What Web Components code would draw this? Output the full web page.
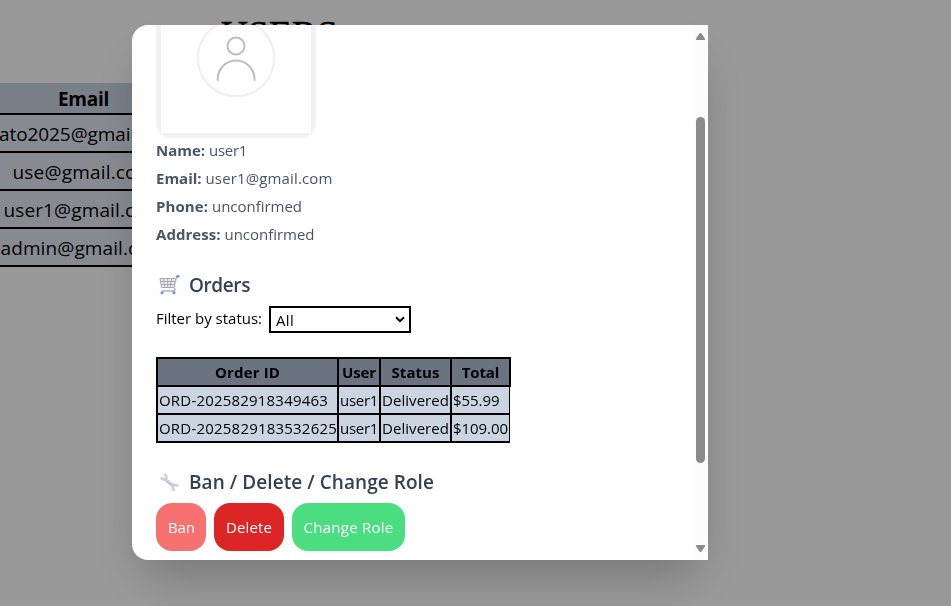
<!DOCTYPE html>
<html lang="en">
<head>
<meta charset="utf-8">
<title>Users</title>
<style>
html,body{margin:0;height:100%;overflow:hidden;background:#fff}
body{font-family:"Open Sans","Noto Sans",sans-serif;font-size:15px;color:#000}
</style>
</head>
<body>
<users-page></users-page>
<user-modal></user-modal>
<script>
const define = (name, html, ready) => customElements.define(name, class extends HTMLElement {
  constructor() {
    super();
    this.attachShadow({mode: 'open'}).innerHTML = html;
  }
  connectedCallback() { if (ready) ready.call(this); }
});

/* Text run whose tracking adapts to the width in its "w" attribute. */
define('fit-text', `<style>:host{display:inline-block;white-space:nowrap;flex:none}span{display:inline-block}</style><span><slot></slot></span>`, function () {
  const w = parseFloat(this.getAttribute('w'));
  const span = this.shadowRoot.querySelector('span');
  this.style.width = w + 'px';
  const n = this.textContent.length;
  const natural = span.getBoundingClientRect().width;
  if (n && natural) span.style.letterSpacing = ((w - natural) / n) + 'px';
});

define('email-row', `<style>
:host{display:flex;box-sizing:border-box;height:38px;align-items:center;justify-content:center;padding-top:1px;border-bottom:2px solid #000;background:#e2e8f0;font-size:19px}
:host([head]){height:32px;background:#cbd5e1;font-weight:700}
</style><slot></slot>`);

define('users-page', `<style>
:host{display:block;height:606px;overflow:hidden}
h1{margin:0;padding:15px 0 0 221px;height:68px;font:400 37px/40px "Liberation Serif",serif;-webkit-text-stroke:.6px #000}
section{width:167px}
</style>
<h1><fit-text w="117">USERS</fit-text></h1>
<section>
<email-row head><fit-text w="51">Email</fit-text></email-row>
<email-row style="padding-left:10px"><fit-text w="179">ato2025@gmail.com</fit-text></email-row>
<email-row><fit-text w="142">use@gmail.com</fit-text></email-row>
<email-row><fit-text w="160">user1@gmail.com</fit-text></email-row>
<email-row><fit-text w="166">admin@gmail.com</fit-text></email-row>
</section>`);

define('user-avatar', `<style>
:host{display:block;box-sizing:border-box;width:160px;height:160px;margin-top:-47px;border:5px solid #f2f2f2;border-radius:16px;background:#f2f2f2}
svg{display:block;background:#fff}
</style>
<svg width="150" height="150" viewBox="0 0 150 150" fill="none" stroke-linecap="round">
<circle cx="75" cy="75" r="38.2" stroke="#efefef" stroke-width="2"/>
<g stroke="#bdbdbd" stroke-width="2"><circle cx="75" cy="63" r="8.5"/><path d="M56.7 97v-1a18.4 18.4 0 0 1 36.8 0v1"/></g>
</svg>`);

define('info-line', `<style>
:host{display:flex;height:28px;align-items:center;gap:4px;color:#475569}
::slotted([slot=label]){font-weight:700}
</style><slot name="label"></slot><slot></slot>`);

define('section-title', `<style>
:host{display:flex;height:28px;align-items:center;gap:9px;color:#334155;font-size:19px;font-weight:600}
::slotted(svg){flex:none}
</style><slot></slot>`);

define('status-select', `<style>
:host{display:flex;box-sizing:border-box;width:142px;height:27px;border:2px solid #000;background:#fff;align-items:center;justify-content:space-between;padding:1px 4px 0 5px}
svg{display:block;margin-top:-2px}
</style><slot></slot><svg width="10" height="7" viewBox="0 0 10 7" fill="none" stroke="#000" stroke-width="2"><path d="M1 1.2 5 5.2 9 1.2"/></svg>`);

define('order-table', `<style>
:host{display:grid;box-sizing:border-box;width:355px;grid-template-columns:179px 40px 69px 57px;grid-auto-rows:26px;gap:2px;padding:2px;background:linear-gradient(#000,#000) 0 0/354px 100% no-repeat,linear-gradient(#000,#000) 0 0/355px 30px no-repeat}
</style><slot></slot>`);
define('order-cell', `<style>
:host{display:flex;align-items:center;padding-left:1px;background:#cbd5e1;min-width:0}
:host([head]){justify-content:center;padding:0;background:#6b7280;font-weight:700}
</style><slot></slot>`);

define('pill-button', `<style>
:host{display:flex;height:48px;align-items:center;justify-content:center;padding:0 12px;border-radius:16px;background:var(--tone);color:#fff}
</style><slot></slot>`);

define('scroll-rail', `<style>
:host{display:flex;box-sizing:border-box;width:15px;height:535px;flex-direction:column;align-items:center;background:#fcfcfc;padding:8px 0 8px}
i{width:9px;height:346px;margin-top:77px;margin-bottom:auto;border-radius:5px;background:#8b8b8b}
svg{display:block}
</style>
<svg width="11" height="7" viewBox="0 0 11 7"><path d="M5.5 0Q6.2 0 6.7.8L10 5.4Q10.5 7 9.2 7H1.8Q.5 7 1 5.4L4.3.8Q4.8 0 5.5 0Z" fill="#8b8b8b"/></svg>
<i></i>
<svg width="11" height="7" viewBox="0 0 11 7"><path d="M5.5 7Q6.2 7 6.7 6.2L10 1.6Q10.5 0 9.2 0H1.8Q.5 0 1 1.6L4.3 6.2Q4.8 7 5.5 7Z" fill="#8b8b8b"/></svg>`);

define('user-modal', `<style>
:host{position:fixed;inset:0;display:block;background:rgba(0,0,0,.4)}
.card{display:flex;box-sizing:border-box;width:576px;height:535px;margin:25px 0 0 132px;background:#fff;border-radius:16px 0 0 16px;overflow:hidden;box-shadow:0 25px 50px -12px rgba(0,0,0,.25)}
main{flex:1;min-width:0;padding-left:24px}
.info{margin-top:-2px}
.orders{margin-top:23px}
.filter{display:flex;align-items:center;gap:7px;margin-top:7px;height:27px}
.filter>fit-text{margin-top:-3px}
order-table{margin-top:24px}
.role{margin-top:25px}
.actions{display:flex;gap:8px;margin-top:7px}
</style>
<div class="card">
<main>
<user-avatar></user-avatar>
<div class="info">
<info-line><fit-text slot="label" w="49">Name:</fit-text><fit-text w="38">user1</fit-text></info-line>
<info-line><fit-text slot="label" w="45.5">Email:</fit-text><fit-text w="127">user1@gmail.com</fit-text></info-line>
<info-line><fit-text slot="label" w="52">Phone:</fit-text><fit-text w="90">unconfirmed</fit-text></info-line>
<info-line><fit-text slot="label" w="64.5">Address:</fit-text><fit-text w="90">unconfirmed</fit-text></info-line>
</div>
<section-title class="orders">
<svg width="24" height="22" viewBox="0 0 24 22" fill="none"><path d="M4 4.5H19.5L17.5 13.5H5.5Z" fill="#ececf0"/><path d="M4 4.5H19.5M4.4 7.5H19M5 10.5H18.3M5.5 13.5H17.5M4 4.5 5.5 13.5M7.8 4.5 8.5 13.5M11.7 4.5V13.5M15.6 4.5 14.6 13.5" stroke="#aaa5b0" stroke-width="1"/><path d="M22 2.5H20.5L18 13.5 19 15.5Q19 17 17.5 17H6" stroke="#b8b0be" stroke-width="1.4"/><path d="M20.5 2.4H23.5" stroke="#5b83bd" stroke-width="2"/><circle cx="6" cy="18.8" r="1.5" fill="#5c94e4"/><circle cx="18" cy="18.8" r="1.5" fill="#5c94e4"/></svg>
<fit-text w="61">Orders</fit-text></section-title>
<div class="filter"><fit-text w="106">Filter by status:</fit-text><status-select><fit-text w="18">All</fit-text></status-select></div>
<order-table>
<order-cell head><fit-text w="65">Order ID</fit-text></order-cell><order-cell head><fit-text w="34">User</fit-text></order-cell><order-cell head><fit-text w="48">Status</fit-text></order-cell><order-cell head><fit-text w="37.5">Total</fit-text></order-cell>
<order-cell><fit-text w="169">ORD-202582918349463</fit-text></order-cell><order-cell><fit-text w="38">user1</fit-text></order-cell><order-cell><fit-text w="67">Delivered</fit-text></order-cell><order-cell><fit-text w="46.5">$55.99</fit-text></order-cell>
<order-cell><fit-text w="178">ORD-2025829183532625</fit-text></order-cell><order-cell><fit-text w="38">user1</fit-text></order-cell><order-cell><fit-text w="67">Delivered</fit-text></order-cell><order-cell><fit-text w="55">$109.00</fit-text></order-cell>
</order-table>
<section-title class="role">
<svg width="24" height="22" viewBox="0 0 24 22" fill="none"><path d="M8 7.5 18.5 15.5" stroke="#d5cbe2" stroke-width="3.4"/><path d="M4.8 6.5Q7 9.8 9.8 8 11.5 5.5 8.5 3M22.3 15.2Q18.8 12.8 17 15.3 15.8 18.2 18.8 19.5" stroke="#d5cbe2" stroke-width="2.6"/><path d="M10 10.5 16.5 15.5" stroke="#b9b0c9" stroke-width="1"/></svg>
<fit-text w="245">Ban / Delete / Change Role</fit-text></section-title>
<div class="actions">
<pill-button style="--tone:#f87171;padding:0 11px 0 12px"><fit-text w="27">Ban</fit-text></pill-button>
<pill-button style="--tone:#dc2626"><fit-text w="46">Delete</fit-text></pill-button>
<pill-button style="--tone:#4ade80;padding:0 11.5px"><fit-text w="90">Change Role</fit-text></pill-button>
</div>
</main>
<scroll-rail></scroll-rail>
</div>`);
</script>
</body>
</html>
